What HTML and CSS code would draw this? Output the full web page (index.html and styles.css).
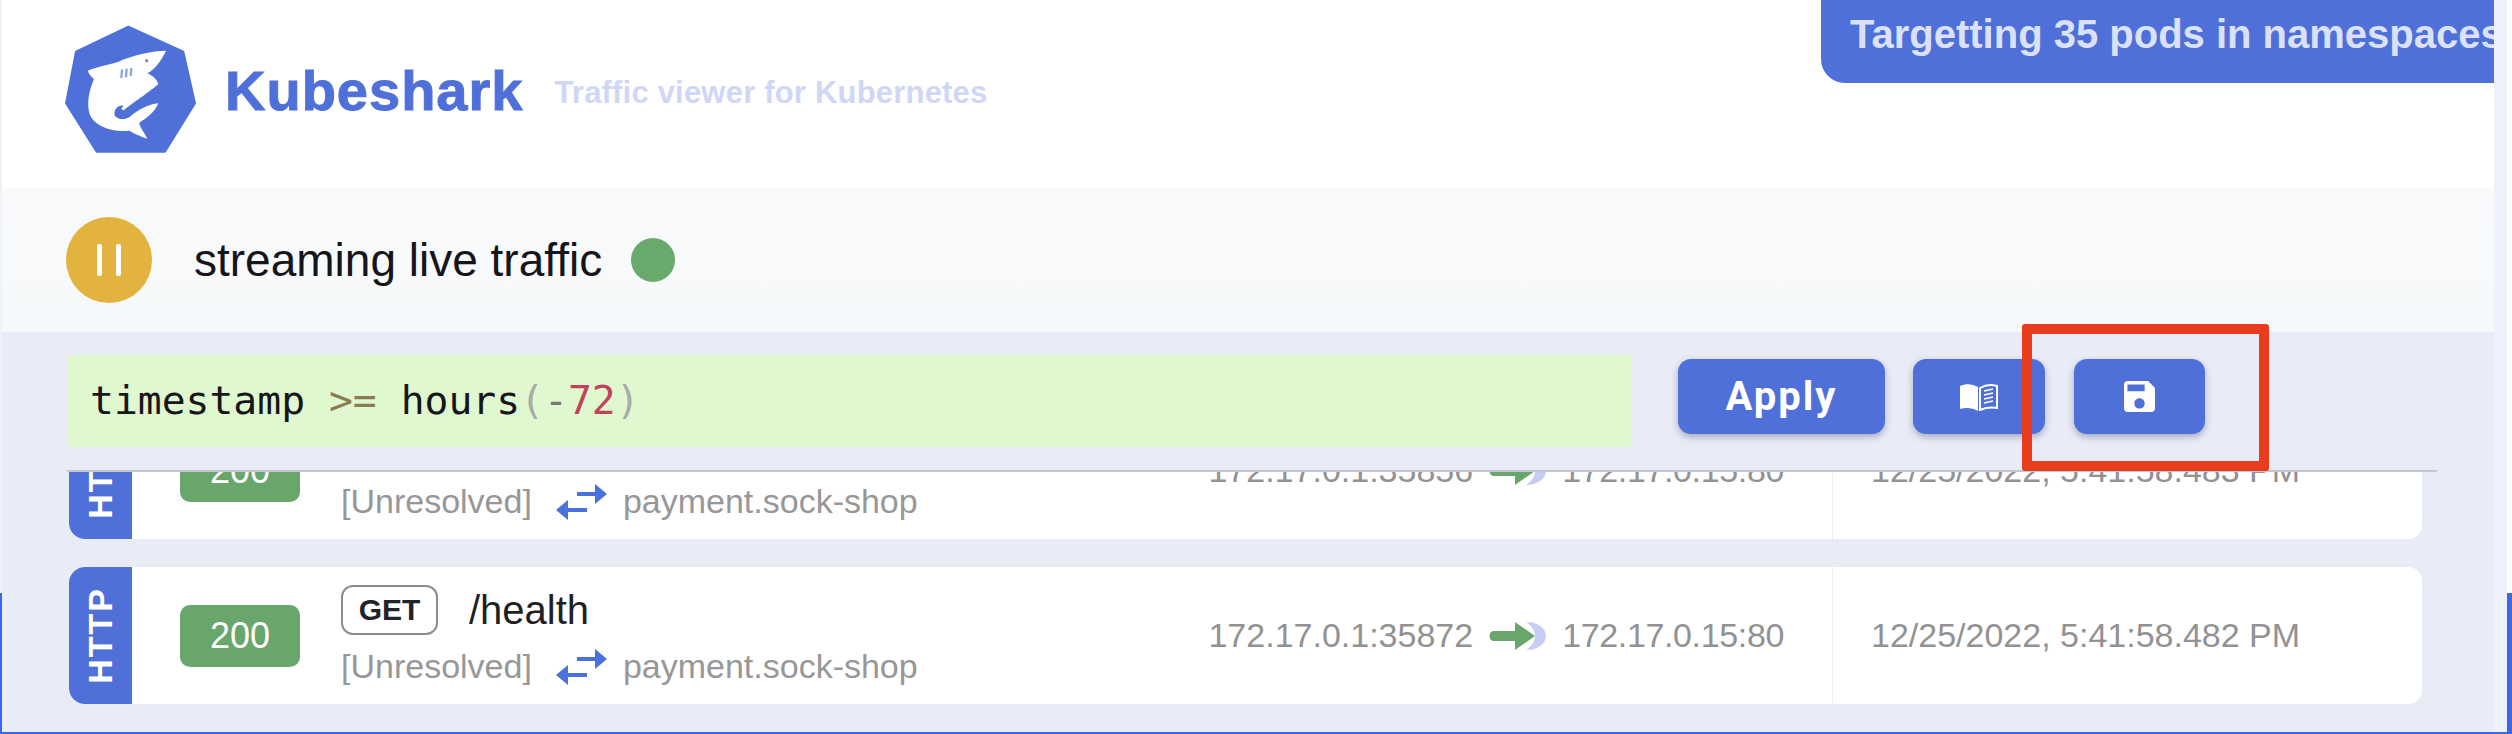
FILE: index.html
```html
<!DOCTYPE html>
<html lang="en">
<head>
<meta charset="utf-8">
<title>Kubeshark</title>
<link rel="stylesheet" href="styles.css">
</head>
<body>
<div class="frame">
  <main class="app">
    <header class="header">
      <svg class="logo" viewBox="0 0 540 450" aria-label="Kubeshark logo">
        <path class="logo-hex" d="M265 50 L430 125 L465 280 L375 425 L170 425 L78 280 L108 125 Z"/>
        <path class="logo-shark" d="M378 122 C340 122 280 135 235 155 C205 165 170 170 143 182 C148 195 155 200 162 207 C148 240 138 280 150 315 C165 350 220 368 268 362 C285 372 305 380 322 386 C312 365 298 350 298 338 C320 325 345 305 355 280 C325 282 295 300 270 320 C255 330 235 330 225 318 C220 305 230 290 245 290 C243 300 250 305 258 295 C290 270 330 245 355 222 C350 208 340 198 322 190 C345 178 365 150 378 122 Z"/>
        <path class="logo-gill" d="M246 178 L244 204 M260 176 L258 202 M274 174 L272 198"/>
        <path class="logo-hook" d="M247 289 C228 290 221 308 232 316 C242 322 252 318 262 310"/>
        <circle class="logo-eye" cx="320" cy="152" r="5"/>
      </svg>
      <h1 class="brand">Kubeshark</h1>
      <span class="tagline">Traffic viewer for Kubernetes</span>
      <div class="banner">Targetting 35 pods in namespaces</div>
    </header>

    <section class="status">
      <button class="pause" aria-label="Pause"><i></i><i></i></button>
      <span class="status-text">streaming live traffic</span>
      <span class="status-dot"></span>
    </section>

    <section class="filter">
      <div class="query"><span>timestamp</span> <span class="op">&gt;=</span> <span>hours</span><span class="paren">(</span><span class="minus">-</span><span class="num">72</span><span class="paren">)</span></div>
      <button class="btn btn-apply">Apply</button>
      <button class="btn btn-book" aria-label="Docs">
        <svg class="icon-book" viewBox="0 0 38 28">
          <path class="book-solid" d="M0 3 C6 0 13 1 18 4 V28 C13 25 6 24 0 26 Z"/>
          <path class="book-line" d="M20 5 C25 2 31 1 37 3 V25 C31 24 25 25 20 27 Z"/>
          <path class="book-rows" d="M24 8 L33 6 M24 12 L33 10 M24 16 L33 14 M24 20 L33 18"/>
        </svg>
      </button>
      <button class="btn btn-save" aria-label="Save">
        <svg class="icon-save" viewBox="3 3 18 18"><path d="M17 3H5c-1.11 0-2 .9-2 2v14c0 1.1.89 2 2 2h14c1.1 0 2-.9 2-2V7l-4-4zm-5 16c-1.66 0-3-1.34-3-3s1.34-3 3-3 3 1.34 3 3-1.34 3-3 3zm3-10H5V5h10v4z"/></svg>
      </button>
      <div class="callout"></div>
    </section>

    <section class="list">
      <div class="rows">
        <article class="row">
          <div class="proto"><span>HTTP</span></div>
          <div class="code">200</div>
          <div class="info">
            <div class="req"><span class="method">GET</span><span class="path">/health</span></div>
            <div class="svc">
              <span>[Unresolved]</span>
              <svg class="swap" viewBox="0 0 52 40"><path d="M22 10 H40 V2 L52 12 L40 22 V14 H22 Z M32 26 H13 V18 L1 28 L13 38 V30 H32 Z"/></svg>
              <span>payment.sock-shop</span>
            </div>
          </div>
          <div class="addr">
            <span>172.17.0.1:35856</span>
            <svg class="flow" viewBox="0 0 58 30"><path class="moon" d="M37 1 C48 1 57 7 57 15 C57 23 48 29 37 29 C43 25 46 20 46 15 C46 10 43 5 37 1 Z"/><path class="arrow" d="M5 10 H26 V1 L46 15 L26 29 V20 H5 C-1 20 -1 10 5 10 Z"/></svg>
            <span class="dest">172.17.0.15:80</span>
          </div>
          <div class="time">12/25/2022, 5:41:58.483 PM</div>
        </article>
        <article class="row">
          <div class="proto"><span>HTTP</span></div>
          <div class="code">200</div>
          <div class="info">
            <div class="req"><span class="method">GET</span><span class="path">/health</span></div>
            <div class="svc">
              <span>[Unresolved]</span>
              <svg class="swap" viewBox="0 0 52 40"><path d="M22 10 H40 V2 L52 12 L40 22 V14 H22 Z M32 26 H13 V18 L1 28 L13 38 V30 H32 Z"/></svg>
              <span>payment.sock-shop</span>
            </div>
          </div>
          <div class="addr">
            <span>172.17.0.1:35872</span>
            <svg class="flow" viewBox="0 0 58 30"><path class="moon" d="M37 1 C48 1 57 7 57 15 C57 23 48 29 37 29 C43 25 46 20 46 15 C46 10 43 5 37 1 Z"/><path class="arrow" d="M5 10 H26 V1 L46 15 L26 29 V20 H5 C-1 20 -1 10 5 10 Z"/></svg>
            <span class="dest">172.17.0.15:80</span>
          </div>
          <div class="time">12/25/2022, 5:41:58.482 PM</div>
        </article>
      </div>
    </section>
  </main>
</div>
</body>
</html>
```
FILE: styles.css
```css
* { box-sizing: border-box; }
html, body { margin: 0; padding: 0; }
body {
  width: 2512px;
  height: 734px;
  overflow: hidden;
  font-family: "Liberation Sans", Arial, sans-serif;
}
button { font: inherit; border: 0; padding: 0; }

.frame {
  width: 2512px;
  height: 734px;
  padding: 0 18px 2px 2px;
  background:
    linear-gradient(#ffffff, #ffffff) right top / 5px 593px no-repeat,
    linear-gradient(#eef1fc, #eef1fc) right 5px top / 13px 732px no-repeat,
    linear-gradient(#eef1fc 593px, #3a68e6 593px);
}
.app {
  width: 2492px;
  height: 732px;
  display: flex;
  flex-direction: column;
  background: #e9ebf7;
}

/* header */
.header {
  height: 188px;
  flex: none;
  display: flex;
  align-items: flex-start;
  padding-left: 38px;
  background: #fff;
}
.logo { width: 180px; height: 150px; margin-top: 10px; flex: none; }
.logo-hex { fill: #4f70d9; stroke: #4f70d9; stroke-width: 6; stroke-linejoin: round; }
.logo-shark { fill: #fff; }
.logo-gill { fill: none; stroke: #8ea3e6; stroke-width: 7; }
.logo-hook { fill: none; stroke: #4f70d9; stroke-width: 5; stroke-linecap: round; }
.logo-eye { fill: #a8849c; }
.brand {
  margin: 61px 0 0 5px;
  font-size: 56px;
  line-height: 60px;
  font-weight: 700;
  letter-spacing: 1px;
  color: #4f70d9;
  -webkit-text-stroke: 1px #4f70d9;
}
.tagline {
  margin: 75px 0 0 31px;
  font-size: 31px;
  line-height: 36px;
  font-weight: 700;
  letter-spacing: .2px;
  color: #cfd7f5;
  white-space: nowrap;
}
.banner {
  margin-left: auto;
  width: 673px;
  height: 83px;
  padding-left: 29px;
  overflow: hidden;
  white-space: nowrap;
  font-size: 40px;
  line-height: 68px;
  font-weight: 700;
  color: #dbe1f8;
  background: #4f70d9;
  border-bottom-left-radius: 24px;
}

/* status */
.status {
  height: 144px;
  flex: none;
  display: flex;
  align-items: center;
  padding-left: 64px;
  background: linear-gradient(#f9f9fa, #f6f9fb);
}
.pause {
  width: 86px;
  height: 86px;
  border-radius: 50%;
  background: #e3b340;
  display: flex;
  justify-content: center;
  align-items: center;
  gap: 14px;
}
.pause i { display: block; width: 5px; height: 32px; background: #fff; border-radius: 2px; }
.status-text { margin-left: 42px; font-size: 46px; line-height: 56px; color: #15151a; }
.status-dot { margin-left: 29px; width: 44px; height: 44px; border-radius: 50%; background: #69a96c; }

/* filter */
.filter {
  position: relative;
  height: 138px;
  flex: none;
  display: flex;
  align-items: flex-start;
  padding: 23px 0 0 65px;
}
.query {
  width: 1565px;
  height: 92px;
  padding-left: 23px;
  font-family: "DejaVu Sans Mono", monospace;
  font-size: 39.7px;
  line-height: 90px;
  white-space: pre;
  color: #16161a;
  background: #dff8cf;
  border-radius: 4px;
}
.op { color: #8a7a55; }
.paren { color: #a8aaa8; }
.minus { color: #777; }
.num { color: #c2415c; }
.btn {
  margin-top: 4px;
  height: 75px;
  border-radius: 13px;
  display: flex;
  align-items: center;
  justify-content: center;
  color: #fff;
  background: #4f70d9;
  box-shadow: 0 3px 7px rgba(40, 50, 90, .35);
}
.btn-apply {
  width: 207px;
  margin-left: 46px;
  font-family: Roboto, "Liberation Sans", sans-serif;
  font-size: 40px;
  font-weight: 700;
  letter-spacing: 2px;
}
.btn-book { width: 132px; margin-left: 28px; }
.btn-save { width: 131px; margin-left: 29px; }
.icon-book { width: 38px; height: 28px; }
.book-solid { fill: #fff; }
.book-line { fill: none; stroke: #fff; stroke-width: 2; }
.book-rows { fill: none; stroke: #fff; stroke-width: 1.6; }
.icon-save { width: 31px; height: 31px; fill: #fff; }
.callout {
  position: absolute;
  left: 2020px;
  top: -8px;
  width: 247px;
  height: 147px;
  border: 10px solid #e93d1e;
  border-radius: 3px;
  z-index: 2;
}

/* list */
.list {
  margin-left: 65px;
  width: 2370px;
  flex: 1;
  min-height: 0;
  overflow: hidden;
  border-top: 2px solid #c3c6d4;
}
.rows {
  margin-top: -70px;
  display: flex;
  flex-direction: column;
  gap: 28px;
  padding-left: 2px;
}
.row {
  width: 2353px;
  height: 137px;
  flex: none;
  display: flex;
  align-items: center;
  background: #fff;
  border-radius: 16px 14px 14px 16px;
}
.proto {
  align-self: stretch;
  width: 63px;
  display: flex;
  align-items: center;
  justify-content: center;
  background: #4f70d9;
  border-radius: 16px 0 0 16px;
}
.proto span {
  writing-mode: vertical-rl;
  transform: rotate(180deg);
  font-size: 34px;
  font-weight: 700;
  letter-spacing: 2px;
  color: #fff;
}
.code {
  margin-left: 48px;
  width: 120px;
  height: 62px;
  display: flex;
  align-items: center;
  justify-content: center;
  border-radius: 10px;
  font-size: 36px;
  color: #fff;
  background: #68a66c;
}
.info { margin-left: 41px; display: flex; flex-direction: column; gap: 12px; }
.req { display: flex; align-items: center; height: 50px; }
.method {
  width: 97px;
  height: 50px;
  display: flex;
  align-items: center;
  justify-content: center;
  border: 2px solid #8d8d8d;
  border-radius: 12px;
  font-size: 30px;
  font-weight: 700;
  color: #22222a;
}
.path { margin-left: 31px; font-size: 40px; line-height: 50px; color: #1f1f24; }
.svc {
  display: flex;
  align-items: center;
  height: 40px;
  font-size: 34px;
  color: #979797;
}
.swap { width: 52px; height: 40px; margin: 0 16px 0 23px; fill: #4a72dc; flex: none; }
.addr {
  margin-left: auto;
  padding-right: 48px;
  display: flex;
  align-items: center;
  font-size: 34px;
  color: #929292;
}
.dest { letter-spacing: -0.36px; }
.flow { width: 58px; height: 30px; margin: 0 15px 0 16px; flex: none; }
.arrow { fill: #68a66c; }
.moon { fill: #c5cdf5; }
.time {
  align-self: stretch;
  width: 590px;
  padding-left: 38px;
  display: flex;
  align-items: center;
  border-left: 1px solid #ececf2;
  font-size: 34px;
  color: #929292;
}
```
